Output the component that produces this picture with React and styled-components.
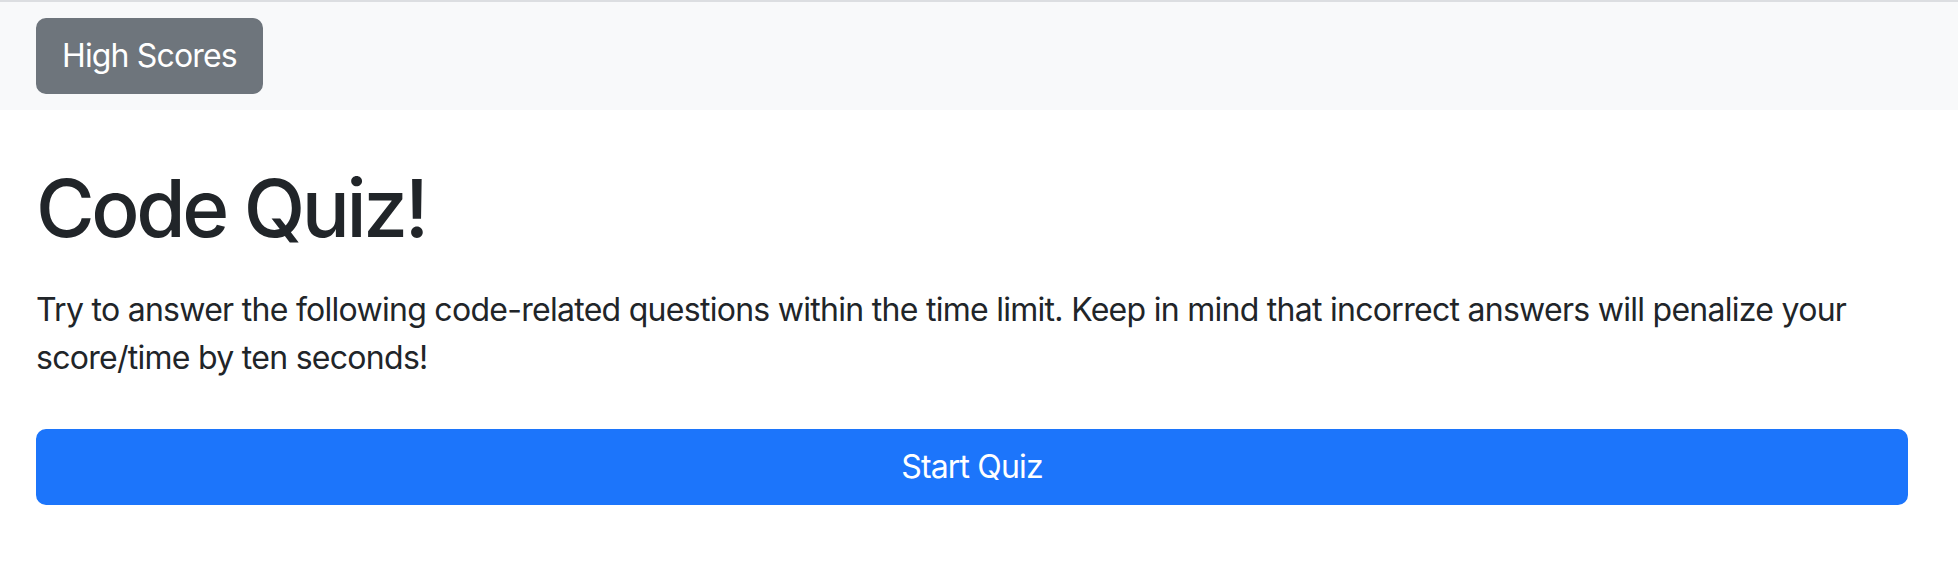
import React from "react";
import styled, { createGlobalStyle } from "styled-components";

const GlobalStyle = createGlobalStyle`
  html, body { margin: 0; padding: 0; background: #ffffff; }
  body {
    font-family: Inter, "Noto Sans", "Liberation Sans", sans-serif;
    color: #212529;
    -webkit-font-smoothing: antialiased;
  }
  * { box-sizing: border-box; }
`;

const Navbar = styled.nav`
  display: flex;
  align-items: center;
  background: #f8f9fa;
  border-top: 2px solid #dcdee1;
  padding: 16px 50px 16px 36px;
`;

const Button = styled.button`
  display: ${(p) => (p.$block ? "block" : "inline-block")};
  width: ${(p) => (p.$block ? "100%" : "auto")};
  font-family: inherit;
  font-size: 32px;
  font-weight: 400;
  line-height: 48px;
  letter-spacing: -0.85px;
  color: #ffffff;
  background: ${(p) => (p.$variant === "primary" ? "#1c75fb" : "#6e757c")};
  border: 2px solid ${(p) => (p.$variant === "primary" ? "#1c75fb" : "#6e757c")};
  border-radius: 10px;
  padding: 12px 24px;
  text-align: center;
  cursor: pointer;
`;

const Main = styled.main`
  padding: 50px 50px 0 36px;
`;

const Title = styled.h1`
  margin: 0 0 30px;
  font-size: 80px;
  font-weight: 500;
  line-height: 96px;
  letter-spacing: -3.4px;
  color: #212529;
`;

const Lead = styled.p`
  margin: 0 0 47px;
  font-size: 32px;
  line-height: 48px;
  letter-spacing: -0.72px;
  color: #212529;
`;

export default function App() {
  return (
    <>
      <GlobalStyle />
      <Navbar>
        <Button $variant="secondary">High Scores</Button>
      </Navbar>
      <Main>
        <Title>Code Quiz!</Title>
        <Lead>
          Try to answer the following code-related questions within the time
          limit. Keep in mind that incorrect answers will penalize your
          score/time by ten seconds!
        </Lead>
        <Button $variant="primary" $block>
          Start Quiz
        </Button>
      </Main>
    </>
  );
}
